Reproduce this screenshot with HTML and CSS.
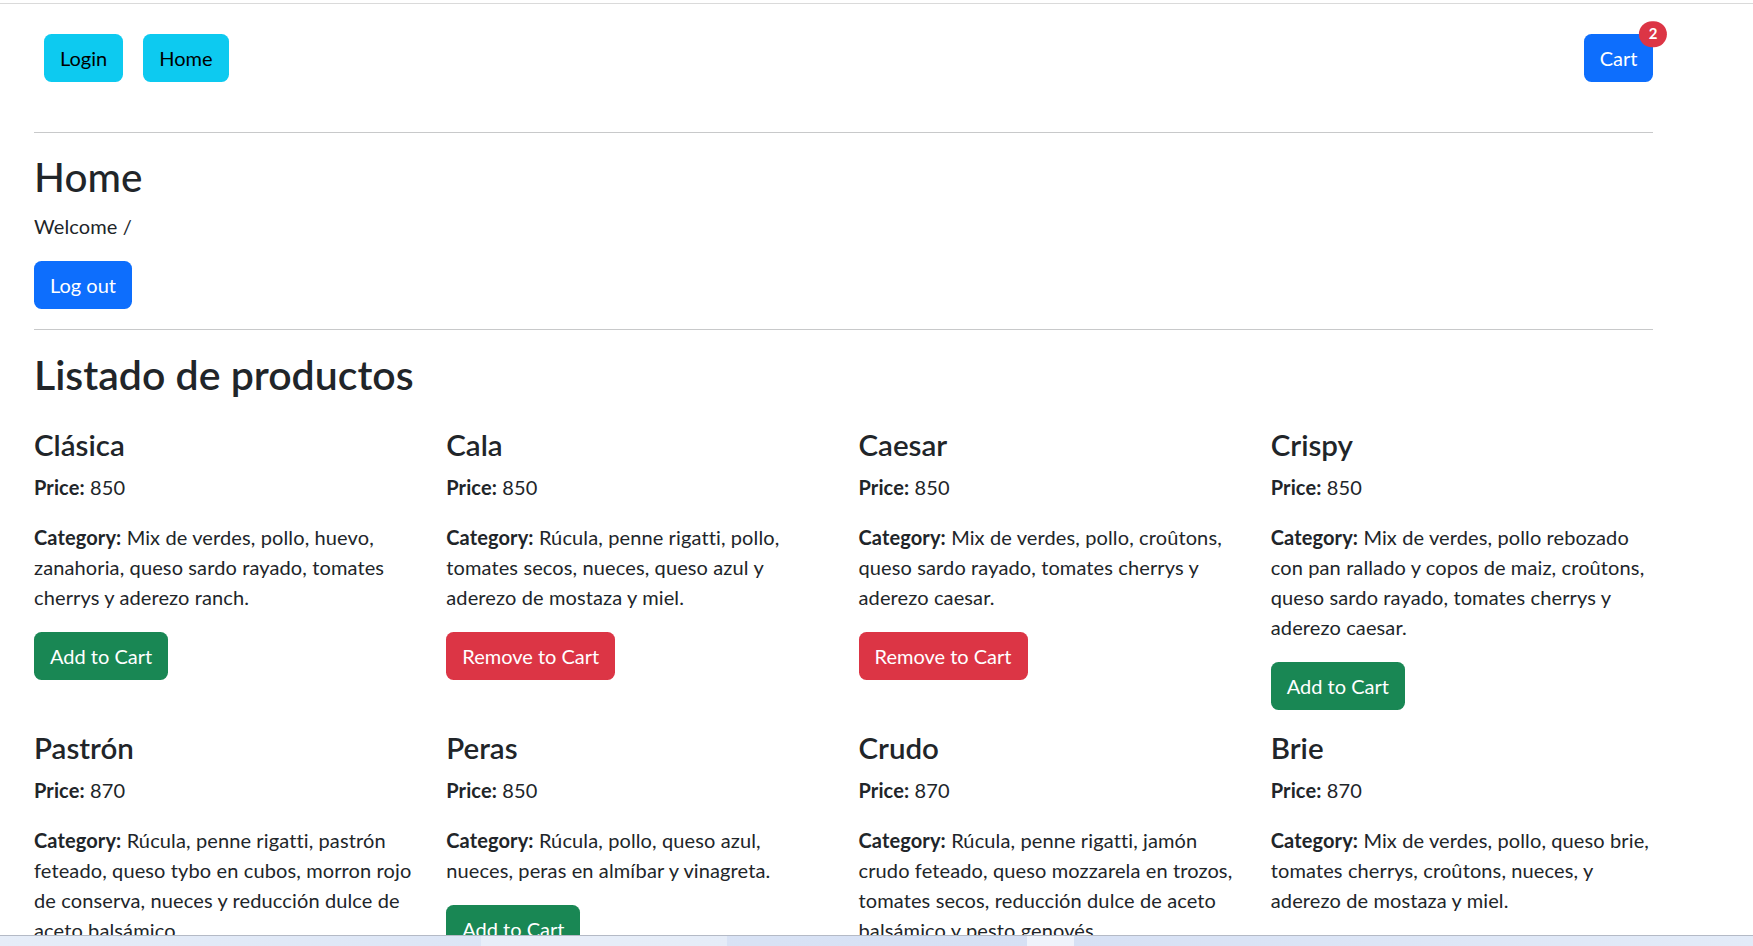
FILE: index.html
```html
<!DOCTYPE html>
<html lang="es">
<head>
<meta charset="utf-8">
<title>Home</title>
<link rel="stylesheet" href="styles.css">
</head>
<body>
<div class="chrome-line"></div>
<div class="container">
  <nav class="topnav">
    <div class="nav-left">
      <button class="btn btn-info">Login</button>
      <button class="btn btn-info">Home</button>
    </div>
    <button class="btn btn-primary cart-btn">Cart<span class="badge">2</span></button>
  </nav>
  <hr>
  <h1 class="page-title">Home</h1>
  <p class="welcome">Welcome /</p>
  <button class="btn btn-primary">Log out</button>
  <hr>
  <h2 class="list-title">Listado de productos</h2>
  <div class="products">
    <div class="product">
      <h4>Clásica</h4>
      <p><b>Price:</b> 850</p>
      <p><b>Category:</b> Mix de verdes, pollo, huevo, zanahoria, queso sardo rayado, tomates cherrys y aderezo ranch.</p>
      <button class="btn btn-success">Add to Cart</button>
    </div>
    <div class="product">
      <h4>Cala</h4>
      <p><b>Price:</b> 850</p>
      <p><b>Category:</b> Rúcula, penne rigatti, pollo, tomates secos, nueces, queso azul y aderezo de mostaza y miel.</p>
      <button class="btn btn-danger">Remove to Cart</button>
    </div>
    <div class="product">
      <h4>Caesar</h4>
      <p><b>Price:</b> 850</p>
      <p><b>Category:</b> Mix de verdes, pollo, croûtons, queso sardo rayado, tomates cherrys y aderezo caesar.</p>
      <button class="btn btn-danger">Remove to Cart</button>
    </div>
    <div class="product">
      <h4>Crispy</h4>
      <p><b>Price:</b> 850</p>
      <p><b>Category:</b> Mix de verdes, pollo rebozado con pan rallado y copos de maiz, croûtons, queso sardo rayado, tomates cherrys y aderezo caesar.</p>
      <button class="btn btn-success">Add to Cart</button>
    </div>
    <div class="product">
      <h4>Pastrón</h4>
      <p><b>Price:</b> 870</p>
      <p><b>Category:</b> Rúcula, penne rigatti, pastrón feteado, queso tybo en cubos, morron rojo de conserva, nueces y reducción dulce de aceto balsámico.</p>
      <button class="btn btn-success">Add to Cart</button>
    </div>
    <div class="product">
      <h4>Peras</h4>
      <p><b>Price:</b> 850</p>
      <p><b>Category:</b> Rúcula, pollo, queso azul, nueces, peras en almíbar y vinagreta.</p>
      <button class="btn btn-success">Add to Cart</button>
    </div>
    <div class="product">
      <h4>Crudo</h4>
      <p><b>Price:</b> 870</p>
      <p><b>Category:</b> Rúcula, penne rigatti, jamón crudo feteado, queso mozzarela en trozos, tomates secos, reducción dulce de aceto balsámico y pesto genovés.</p>
      <button class="btn btn-success">Add to Cart</button>
    </div>
    <div class="product">
      <h4>Brie</h4>
      <p><b>Price:</b> 870</p>
      <p><b>Category:</b> Mix de verdes, pollo, queso brie, tomates cherrys, croûtons, nueces, y aderezo de mostaza y miel.</p>
      <button class="btn btn-success">Add to Cart</button>
    </div>
  </div>
</div>
<div class="taskbar">
  <span class="tb-item tb-a"></span>
  <span class="tb-item tb-b"></span>
</div>
</body>
</html>
```
FILE: styles.css
```css
html { overflow: hidden; }
body {
  margin: 0;
  font-family: "Lato", "Open Sans", sans-serif;
  font-size: 20px;
  line-height: 30px;
  color: #212529;
  background: #fff;
  letter-spacing: 0.12px;
}
.chrome-line {
  height: 3px;
  border-bottom: 1px solid #dadada;
}
.container {
  width: 1619px;
  margin-left: 34px;
}
.topnav {
  display: flex;
  justify-content: space-between;
  align-items: center;
  padding: 30px 0 30px 10px;
}
.nav-left {
  display: flex;
  gap: 20px;
}
.btn {
  font-family: inherit;
  font-size: 20px;
  line-height: 30px;
  letter-spacing: 0;
  padding: 8.75px 16px;
  border: 0;
  border-radius: 7.5px;
  cursor: pointer;
  display: inline-block;
}
.btn-info { background: #0dcaf0; color: #000; }
.btn-primary { background: #0d6efd; color: #fff; }
.btn-success { background: #198754; color: #fff; }
.btn-danger { background: #dc3545; color: #fff; }
.cart-btn { position: relative; padding-left: 15.5px; padding-right: 15.5px; }
.badge {
  position: absolute;
  top: 0;
  left: 100%;
  transform: translate(-50%, -50%);
  background: #dc3545;
  color: #fff;
  font-size: 15px;
  font-weight: 700;
  line-height: 1;
  padding: 5.25px 9.75px;
  border-radius: 50px;
  letter-spacing: 0;
}
hr {
  border: 0;
  border-top: 1px solid #c8c9ca;
  margin: 20px 0;
}
h1, h2, h4 {
  margin: 0 0 10px;
  line-height: 1.2;
  font-weight: 500;
  letter-spacing: 0;
}
.page-title { font-size: 40.5px; }
.list-title { font-size: 41px; font-weight: 600; }
.welcome { margin: 0 0 20px; }
.products {
  display: grid;
  grid-template-columns: repeat(4, 1fr);
  column-gap: 30px;
  row-gap: 20px;
  padding-top: 18px;
}
.product h4 { font-size: 29.5px; font-weight: 600; }
.product p { margin: 0 0 20px; }
.product b { font-weight: 700; }
.taskbar {
  position: fixed;
  left: 0;
  right: 0;
  bottom: 0;
  height: 10px;
  border-top: 1px solid #b4bac6;
  background: linear-gradient(90deg, #e6edf8 0%, #d9e3f5 35%, #d6e0f4 60%, #e3ebf8 100%);
}
.tb-item {
  position: absolute;
  top: 0;
  bottom: 0;
  background: rgba(255,255,255,0.35);
}
.tb-a { left: 481px; width: 246px; }
.tb-b { left: 1027px; width: 47px; background: rgba(255,255,255,0.6); }
```
